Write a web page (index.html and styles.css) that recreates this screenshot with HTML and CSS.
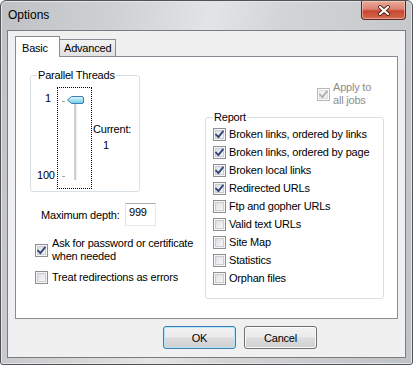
FILE: index.html
```html
<!DOCTYPE html>
<html lang="en">

<head>
  <meta charset="UTF-8" />
  <title>Options</title>
  <link rel="stylesheet" href="styles.css">
</head>

<body>
  <svg class="defs" width="0" height="0">
    <symbol id="tick" viewBox="0 0 11 11">
      <path d="M2 5.6 L4.4 8.2 L9 2.4" fill="none" stroke-width="1.9" stroke-linecap="round" stroke-linejoin="round" />
    </symbol>
  </svg>

  <div class="window">
    <!-- Title bar -->
    <div class="titlebar">
      <span class="title">Options</span>
      <div class="close">
        <svg width="14" height="11" viewBox="0 0 14 11">
          <path d="M3 2 L11 9 M11 2 L3 9" stroke="#4b1d15" stroke-width="3.8" stroke-linecap="round" />
          <path d="M3 2 L11 9 M11 2 L3 9" stroke="#fff" stroke-width="2.2" stroke-linecap="round" />
        </svg>
      </div>
    </div>

    <div class="client">
      <!-- Tabs -->
      <div class="tabs">
        <div class="tab active">Basic</div>
        <div class="tab">Advanced</div>
      </div>

      <div class="panel">
        <div class="col-left">
          <fieldset class="group threads">
            <legend>Parallel Threads</legend>
            <div class="slider-row">
              <div class="scale">
                <span class="scale-min">1</span>
                <span class="scale-max">100</span>
              </div>
              <div class="slider">
                <svg width="33" height="100" viewBox="0 0 33 100">
                  <defs>
                    <linearGradient id="thumb" x1="0" y1="0" x2="0" y2="1">
                      <stop offset="0" stop-color="#e8f8fe" />
                      <stop offset="0.5" stop-color="#a8e0f4" />
                      <stop offset="1" stop-color="#6ccae9" />
                    </linearGradient>
                  </defs>
                  <line x1="4" y1="13.5" x2="7" y2="13.5" stroke="#a6a6a6" />
                  <line x1="4" y1="88.5" x2="7" y2="88.5" stroke="#a6a6a6" />
                  <rect x="16" y="15" width="2" height="77" fill="#cfcfcf" />
                  <rect x="18" y="15" width="1" height="77" fill="#eeeeee" />
                  <path d="M9.5 12 L13.5 8.5 H24 A1.5 1.5 0 0 1 25.5 10 V14 A1.5 1.5 0 0 1 24 15.5 H13.5 Z" fill="url(#thumb)" stroke="#3b80b3" />
                </svg>
              </div>
              <div class="current">
                <span>Current:</span>
                <span class="current-val">1</span>
              </div>
            </div>
          </fieldset>

          <div class="depth">
            <span class="depth-label">Maximum depth:</span>
            <div class="textbox">999</div>
          </div>

          <div class="check ask">
            <span class="cb"><svg width="11" height="11"><use href="#tick" /></svg></span>
            <span>Ask for password or certificate<br>when needed</span>
          </div>
          <div class="check treat">
            <span class="cb"></span>
            <span>Treat redirections as errors</span>
          </div>
        </div>

        <div class="col-right">
          <div class="check apply disabled">
            <span class="cb"><svg width="11" height="11"><use href="#tick" /></svg></span>
            <span>Apply to<br>all jobs</span>
          </div>

          <fieldset class="group report">
            <legend>Report</legend>
            <div class="report-list">
              <div class="check"><span class="cb"><svg width="11" height="11"><use href="#tick" /></svg></span><span>Broken links, ordered by links</span></div>
              <div class="check"><span class="cb"><svg width="11" height="11"><use href="#tick" /></svg></span><span>Broken links, ordered by page</span></div>
              <div class="check"><span class="cb"><svg width="11" height="11"><use href="#tick" /></svg></span><span>Broken local links</span></div>
              <div class="check"><span class="cb"><svg width="11" height="11"><use href="#tick" /></svg></span><span>Redirected URLs</span></div>
              <div class="check"><span class="cb"></span><span>Ftp and gopher URLs</span></div>
              <div class="check"><span class="cb"></span><span>Valid text URLs</span></div>
              <div class="check"><span class="cb"></span><span>Site Map</span></div>
              <div class="check"><span class="cb"></span><span>Statistics</span></div>
              <div class="check"><span class="cb"></span><span>Orphan files</span></div>
            </div>
          </fieldset>
        </div>
      </div>

      <!-- Buttons -->
      <div class="buttons">
        <button class="btn default">OK</button>
        <button class="btn">Cancel</button>
      </div>
    </div>
  </div>
</body>

</html>
```

FILE: styles.css
```css
* {
  margin: 0;
  padding: 0;
  box-sizing: border-box;
}

body {
  width: 413px;
  height: 365px;
  font-family: "Liberation Sans", Arial, sans-serif;
  font-size: 11px;
  letter-spacing: -0.2px;
  color: #000;
  background: #fff;
}

.defs {
  position: absolute;
}

/* Window frame */
.window {
  width: 413px;
  height: 365px;
  display: flex;
  flex-direction: column;
  border: 1px solid #505254;
  border-radius: 6px 6px 3px 3px;
  background: linear-gradient(100deg, #bfc2c5 0%, #cfd1d3 25%, #e3e4e6 45%, #d2d4d6 60%, #c0c3c6 100%);
  box-shadow: inset 0 0 0 1px #e4e6e8;
}

.titlebar {
  height: 29px;
  display: flex;
  align-items: center;
}

.title {
  font-size: 12px;
  letter-spacing: 0;
  padding-left: 7px;
  padding-bottom: 2px;
}

.close {
  align-self: flex-start;
  margin-left: auto;
  margin-right: 6px;
  width: 45px;
  height: 19px;
  display: flex;
  align-items: center;
  justify-content: center;
  border: 1px solid #5a2a22;
  border-top: none;
  border-radius: 0 0 4px 4px;
  background: linear-gradient(#e9a99b 0%, #dc8472 45%, #c8462f 55%, #d56a4f 100%);
  box-shadow: inset 0 0 0 1px rgba(255, 220, 210, 0.5);
}

/* Client area */
.client {
  flex: 1;
  margin: 0 6px 6px;
  border: 1px solid #7a7c7e;
  background: #f0f0f0;
  display: flex;
  flex-direction: column;
}

.tabs {
  display: flex;
  align-items: flex-end;
  height: 21px;
  margin: 5px 0 -1px 7px;
}

.tab {
  height: 18px;
  padding: 0 4px;
  line-height: 16px;
  border: 1px solid #898c95;
  border-left: none;
  border-bottom: none;
  background: linear-gradient(#f3f3f3, #e0e0e0);
}

.tab.active {
  position: relative;
  z-index: 1;
  height: 21px;
  width: 45px;
  padding: 0 6px;
  line-height: 22px;
  border-left: 1px solid #898c95;
  background: #fff;
}

.panel {
  height: 263px;
  margin: 0 7px 0 7px;
  border: 1px solid #898c95;
  background: #fff;
  display: grid;
  grid-template-columns: 175px 178px;
  align-items: start;
  padding-left: 14px;
}

/* Group boxes */
.group {
  border: 1px solid #d5dfe5;
  border-radius: 3px;
}

.group legend {
  line-height: 13px;
  padding: 0 1px;
}

.threads {
  width: 110px;
  margin-top: 12px;
  padding: 0 0 2px;
}

.threads legend {
  margin-left: 6px;
}

.slider-row {
  display: flex;
  margin-top: 5px;
}

.scale {
  width: 26px;
  display: flex;
  flex-direction: column;
  justify-content: space-between;
  line-height: 13px;
  padding: 5px 0 7px;
}

.scale-min {
  padding-left: 14px;
}

.scale-max {
  padding-left: 6px;
}

.slider {
  width: 35px;
  height: 102px;
  border: 1px dotted #000;
}

.slider svg {
  display: block;
}

.current {
  display: flex;
  flex-direction: column;
  gap: 3px;
  line-height: 13px;
  padding: 36px 0 0 1px;
}

.current-val {
  padding-left: 10px;
}

.depth {
  display: flex;
  align-items: center;
  margin-top: 11px;
  padding-left: 11px;
}

.depth-label {
  width: 84px;
}

.textbox {
  width: 31px;
  height: 23px;
  padding: 2px 0 0 3px;
  border: 1px solid;
  border-color: #abadb3 #e3e9ef #e3e9ef #e2e3ea;
}

/* Checkboxes */
.check {
  display: flex;
  align-items: center;
  gap: 4px;
  line-height: 13px;
}

.cb {
  width: 13px;
  height: 13px;
  flex: none;
  display: flex;
  align-items: center;
  justify-content: center;
  border: 1px solid #8e8f8f;
  background: linear-gradient(135deg, #d4d7db 0%, #eef0f2 60%, #fbfbfb 100%);
  box-shadow: inset 0 0 0 1px #f6f6f6, inset 0 0 0 2px #c9ccd1;
  stroke: #33477a;
}

.cb svg {
  display: block;
}

.disabled {
  color: #8d8d8d;
}

.disabled .cb {
  border-color: #b9b9b9;
  background: #f2f2f2;
  box-shadow: inset 0 0 0 1px #fafafa, inset 0 0 0 2px #dedede;
  stroke: #b0b0b0;
}

.ask {
  margin-top: 11px;
  padding-left: 5px;
}

.treat {
  margin-top: 8px;
  padding-left: 5px;
}

.apply {
  margin-top: 24px;
  padding-left: 112px;
  gap: 3px;
}

.report {
  width: 179px;
  margin-top: 4px;
  padding: 0 0 11px 7px;
}

.report legend {
  margin-left: 0;
}

.report-list {
  padding-top: 1px;
}

.report-list .check {
  height: 18px;
  gap: 3px;
}

/* Dialog buttons */
.buttons {
  display: flex;
  gap: 8px;
  padding: 7px 0 0 155px;
}

.btn {
  width: 73px;
  height: 23px;
  font-family: "Liberation Sans", Arial, sans-serif;
  font-size: 11px;
  letter-spacing: -0.2px;
  color: #000;
  border: 1px solid #707070;
  border-radius: 3px;
  background: linear-gradient(#f2f2f2 0%, #ebebeb 48%, #dddddd 52%, #cfcfcf 100%);
  box-shadow: inset 0 0 0 1px #fbfbfb;
}

.btn.default {
  border-color: #3c7fb1;
  box-shadow: inset 0 0 0 1px #b4e6f9;
}
```
